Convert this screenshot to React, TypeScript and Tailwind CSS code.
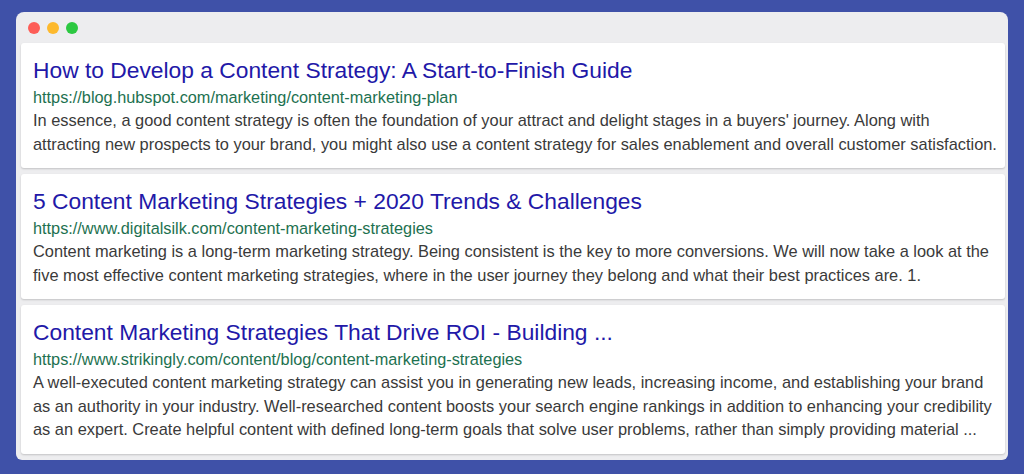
const results = [
  {
    title: 'How to Develop a Content Strategy: A Start-to-Finish Guide',
    url: 'https://blog.hubspot.com/marketing/content-marketing-plan',
    lines: [
      "In essence, a good content strategy is often the foundation of your attract and delight stages in a buyers' journey. Along with",
      'attracting new prospects to your brand, you might also use a content strategy for sales enablement and overall customer satisfaction.',
    ],
  },
  {
    title: '5 Content Marketing Strategies + 2020 Trends & Challenges',
    url: 'https://www.digitalsilk.com/content-marketing-strategies',
    lines: [
      'Content marketing is a long-term marketing strategy. Being consistent is the key to more conversions. We will now take a look at the',
      'five most effective content marketing strategies, where in the user journey they belong and what their best practices are. 1.',
    ],
  },
  {
    title: 'Content Marketing Strategies That Drive ROI - Building ...',
    url: 'https://www.strikingly.com/content/blog/content-marketing-strategies',
    lines: [
      'A well-executed content marketing strategy can assist you in generating new leads, increasing income, and establishing your brand',
      'as an authority in your industry. Well-researched content boosts your search engine rankings in addition to enhancing your credibility',
      'as an expert. Create helpful content with defined long-term goals that solve user problems, rather than simply providing material ...',
    ],
  },
];

function ResultCard({ title, url, lines }: { title: string; url: string; lines: string[] }) {
  return (
    <div className="rounded-[3px] bg-white px-3 pt-3 pb-3 shadow-[0_1px_2px_rgba(0,0,0,0.18)]">
      <div className="text-[22.8px] leading-[30px] text-[#2218a8] whitespace-nowrap">{title}</div>
      <div className="text-[16.3px] leading-[24px] text-[#1d7150] whitespace-nowrap">{url}</div>
      {lines.map((line, i) => (
        <div key={i} className="text-[16.4px] leading-[23.5px] text-[#3a3a3a] whitespace-nowrap">
          {line}
        </div>
      ))}
    </div>
  );
}

export default function App() {
  return (
    <div
      className="h-[474px] w-[1024px] overflow-hidden bg-[#3f51a8] pt-3 pl-4 pr-4"
      style={{ fontFamily: '"Liberation Sans", Arial, sans-serif' }}
    >
      <div className="overflow-hidden rounded-t-[8px] rounded-b-[6px] bg-[#ededef]">
        <div className="flex h-[31px] items-center gap-[7px] px-[12px]">
          <span className="h-3 w-3 rounded-full bg-[#fd5d57]" />
          <span className="h-3 w-3 rounded-full bg-[#fdb92d]" />
          <span className="h-3 w-3 rounded-full bg-[#2cc841]" />
        </div>
        <div className="flex flex-col gap-[6px] pl-[5px] pr-[3px] pb-[6px]">
          {results.map((r) => (
            <ResultCard key={r.url} {...r} />
          ))}
        </div>
      </div>
    </div>
  );
}
